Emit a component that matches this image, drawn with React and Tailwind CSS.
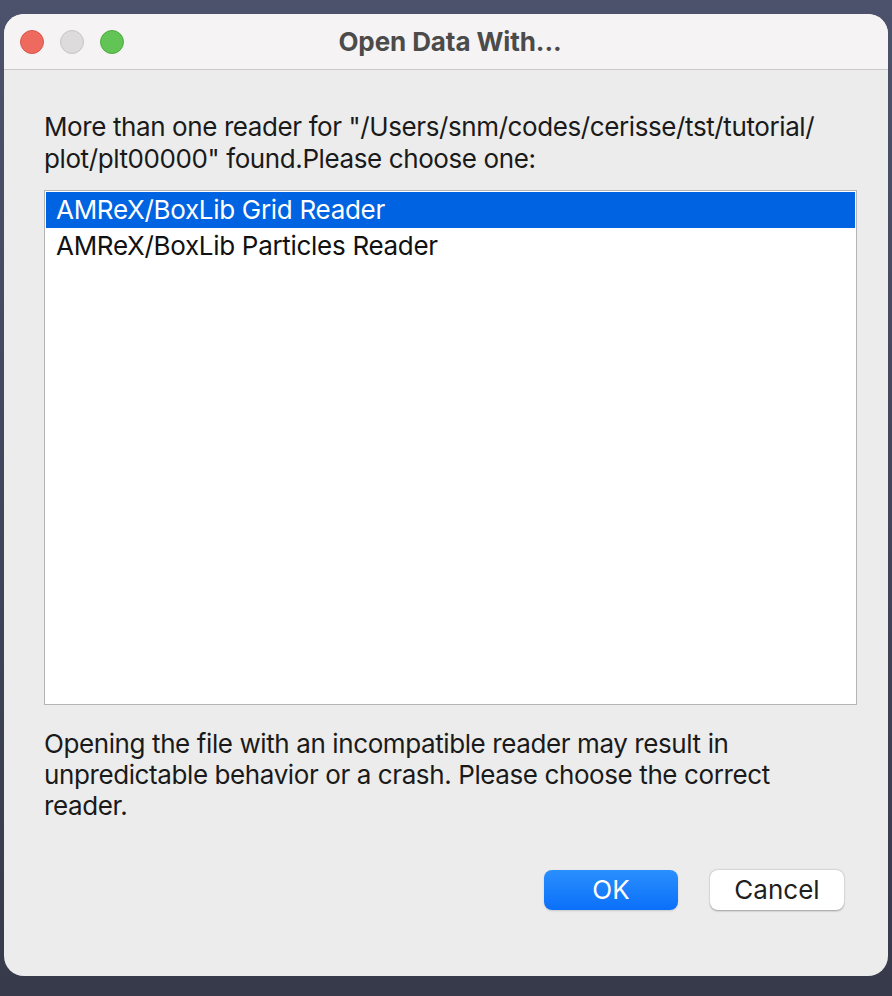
import React from "react";

const font = { fontFamily: "Inter, 'Noto Sans', sans-serif" };

export default function App() {
  return (
    <div
      className="w-[892px] h-[996px] bg-gradient-to-b from-[#4c526b] to-[#373a4b] pt-[14px] pl-[4px] pr-[4px] overflow-hidden"
      style={font}
    >
      <div className="w-[884px] h-[962px] rounded-[20px] bg-[#ececec] overflow-hidden flex flex-col">
        <div className="relative h-[56px] bg-[#f6f3f4] border-b border-[#c9c7c8] flex items-center shrink-0">
          <div className="flex gap-[16px] pl-[16px]">
            <span className="w-[24px] h-[24px] rounded-full bg-[#ee6a5f] border border-[#d5574d]" />
            <span className="w-[24px] h-[24px] rounded-full bg-[#dddbdb] border border-[#c6c4c4]" />
            <span className="w-[24px] h-[24px] rounded-full bg-[#61c454] border border-[#4fab42]" />
          </div>
          <div className="absolute inset-0 flex items-center justify-center pl-[8px] text-[26px] font-bold text-[#4b4b4b] tracking-[-0.1px]">
            Open Data With...
          </div>
        </div>
        <div className="flex flex-col pl-[40px] pr-[28px] pt-[41px]">
          <p className="text-[26px] leading-[32px] text-[#1a1a1a] tracking-[-0.4px]">
            More than one reader for "/Users/snm/codes/cerisse/tst/tutorial/
            <br />
            plot/plt00000" found.Please choose one:
          </p>
          <div className="mt-[15px] w-[813px] h-[515px] bg-white border border-[#b4b4b4] p-[1px] flex flex-col">
            <div className="h-[36px] bg-[#0063e1] text-white text-[26px] leading-[36px] pl-[10px] tracking-[-0.3px]">
              AMReX/BoxLib Grid Reader
            </div>
            <div className="h-[36px] text-[#111] text-[26px] leading-[36px] pl-[10px] tracking-[-0.3px]">
              AMReX/BoxLib Particles Reader
            </div>
          </div>
          <p className="mt-[23px] text-[26px] leading-[31px] text-[#1a1a1a] tracking-[-0.4px]">
            Opening the file with an incompatible reader may result in
            <br />
            unpredictable behavior or a crash. Please choose the correct
            <br />
            reader.
          </p>
          <div className="flex justify-end gap-[32px] mt-[49px] pr-[16px]">
            <button className="w-[134px] h-[40px] rounded-[8px] bg-gradient-to-b from-[#2a8ffe] to-[#0a6ff9] text-white text-[26px] leading-[40px] shadow-[0_1px_2px_rgba(0,0,0,0.15)]">
              OK
            </button>
            <button className="w-[134px] h-[40px] rounded-[8px] bg-white text-[#1f1f1f] text-[26px] leading-[40px] shadow-[0_0.5px_2px_rgba(0,0,0,0.35)]">
              Cancel
            </button>
          </div>
        </div>
      </div>
    </div>
  );
}
